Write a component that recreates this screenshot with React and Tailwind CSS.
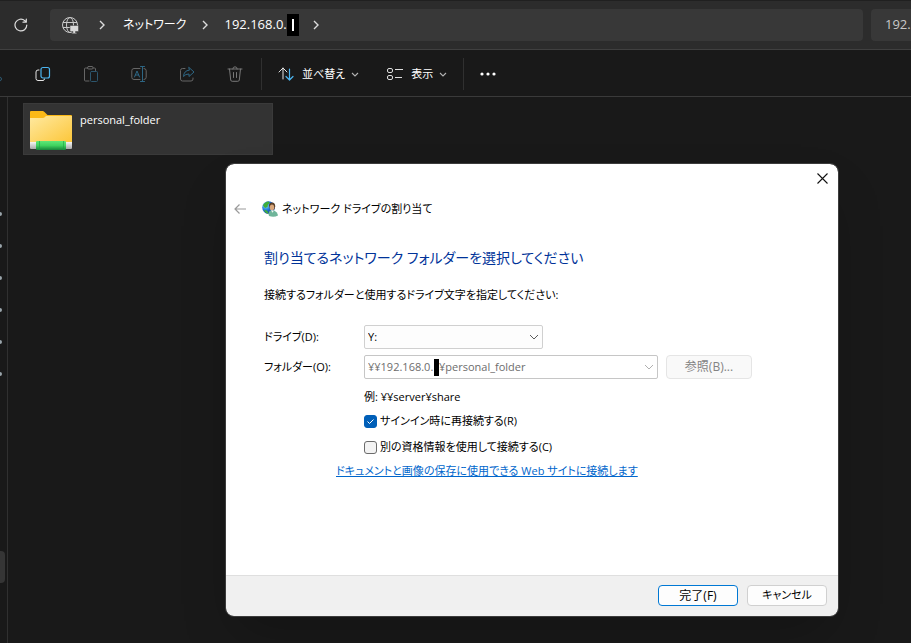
import { useState } from 'react';

const SIDEBAR_ITEMS = [1, 2, 3, 4, 5, 6];

function Chevron({ className }) {
  return (
    <svg viewBox="0 0 10 6" className={className} fill="none" stroke="currentColor" aria-hidden="true">
      <path d="M1 1l4 4 4-4" />
    </svg>
  );
}

function SmallChevron() {
  return (
    <svg viewBox="0 0 8 5" className="w-2 h-[5px] ml-1.5 text-[#b4b4b4]" fill="none" stroke="currentColor" strokeWidth="1.100" aria-hidden="true">
      <path d="M1 1l3 3 3-3" />
    </svg>
  );
}

function Crumb({ className }) {
  return (
    <svg viewBox="0 0 6 10" className={`w-1.5 h-2.5 shrink-0 ${className}`} fill="none" stroke="#dcdcdc" strokeWidth="1.4" aria-hidden="true">
      <path d="M1 1l4 4-4 4" />
    </svg>
  );
}

function GlobeIcon() {
  return (
    <svg viewBox="0 0 17 17" className="w-[17px] h-[17px] shrink-0" fill="none" aria-hidden="true">
      <g stroke="#c9c9c9">
        <circle cx="8" cy="8" r="7.500" />
        <ellipse cx="8" cy="8" rx="3.500" ry="7.500" />
        <path d="M1 5.500h14M1 10.500h14" />
      </g>
      <path d="M8 8.500h8.500v6h-3v1.200h1.200v1H9.800v-1H11v-1.200H8z" fill="#d8d8d8" stroke="#383838" strokeWidth="0.500" />
    </svg>
  );
}

function FolderIcon() {
  return (
    <svg viewBox="0 0 42 40" className="w-[42px] h-10 shrink-0" aria-hidden="true">
      <defs>
        <linearGradient id="folder" x1="0" y1="0" x2="1" y2="1">
          <stop offset="0" stopColor="#ffe9a0" />
          <stop offset="1" stopColor="#fcc638" />
        </linearGradient>
        <linearGradient id="pipe" x1="0" y1="0" x2="0" y2="1">
          <stop offset="0" stopColor="#5fe878" />
          <stop offset="0.5" stopColor="#3fd25f" />
          <stop offset="1" stopColor="#15843a" />
        </linearGradient>
        <linearGradient id="cap" x1="0" y1="0" x2="0" y2="1">
          <stop offset="0" stopColor="#f5f5f5" />
          <stop offset="1" stopColor="#a9a9a9" />
        </linearGradient>
      </defs>
      <path d="M0 2q0-1 1-1h11.500q1 0 2 1l3 3H41q1 0 1 1v10H0z" fill="#fbb917" />
      <path d="M0 8h13q1 0 2-1l1-1h26v27H0z" fill="url(#folder)" />
      <path d="M0 32h6v7H1q-1 0-1-1zM36 32h6v6q0 1-1 1h-5z" fill="url(#cap)" />
      <rect x="6" y="31" width="30" height="9" rx="1" fill="url(#pipe)" />
      <path d="M9.500 31v9M33.500 31v9" stroke="#1d9a44" strokeWidth="0.8" opacity="0.7" />
    </svg>
  );
}

function NetworkDriveIcon() {
  return (
    <svg viewBox="0 0 16 16" className="w-4 h-4 shrink-0" aria-hidden="true">
      <defs>
        <radialGradient id="earth" cx="0.3" cy="0.35" r="0.75">
          <stop offset="0" stopColor="#7fe0ff" />
          <stop offset="0.5" stopColor="#1f74d8" />
          <stop offset="1" stopColor="#0a2c86" />
        </radialGradient>
      </defs>
      <circle cx="6.500" cy="6.500" r="6.300" fill="url(#earth)" />
      <path d="M1 4.500C2 2 4 .7 6.500.5L8 2 6 3.500 5.500 6 3 7zM2 9l3 .5 1.500 2.500-1 .8C3.800 12 2.600 10.800 2 9z" fill="#3fae3a" />
      <path d="M7 4.500C7 2.500 8.500 1.500 10.200 1.500s3.200 1.500 3 3.700L12.500 8H8z" fill="#5a4029" />
      <ellipse cx="10" cy="6.500" rx="2.200" ry="3" fill="#d9a77c" />
      <path d="M6.500 13q0-3 2.500-3.700l3 .2q3.500 1.500 4 5-4 2.300-9 .5z" fill="#6fb59a" />
      <path d="M9 9.200l1.500 2.500L12 9.400z" fill="#eef6f2" />
    </svg>
  );
}

function ToolButton({ label, children }) {
  return (
    <button type="button" aria-label={label} className="w-12 h-8 shrink-0 flex items-center justify-center">
      <svg viewBox="0 0 16 16" className="w-4 h-4" fill="none" stroke="#666666" strokeLinecap="round" strokeLinejoin="round">
        {children}
      </svg>
    </button>
  );
}

function AddressBar() {
  return (
    <div className="flex items-center gap-2 h-[50px] bg-[#2c2c2c] border-t border-t-[#202020] border-b border-b-[#404040]">
      <button type="button" aria-label="更新" className="w-[42px] shrink-0 flex justify-center">
        <svg viewBox="0 0 14 14" className="w-3.5 h-3.5" fill="none" stroke="#dedede" strokeWidth="1.2" strokeLinecap="round" strokeLinejoin="round">
          <path d="M12.800 7A5.900 5.900 0 1 1 10.800 2.600L12.300 4M12.300 1v3.200H9" />
        </svg>
      </button>
      <nav className="flex-1 flex items-center h-8 px-3 rounded bg-[#383838] text-white text-[13px]">
        <GlobeIcon />
        <Crumb className="ml-5" />
        <span className="ml-[18px] text-[12px]">ネットワーク</span>
        <Crumb className="ml-4" />
        <span className="ml-4 flex items-center">
          192.168.0.
          <span className="w-3 h-[22px] bg-black flex items-center justify-center">
            <span className="w-0.5 h-3 bg-white" />
          </span>
        </span>
        <Crumb className="ml-3.5" />
      </nav>
      <div className="w-10 h-8 pl-3.5 shrink-0 flex items-center overflow-hidden rounded-l bg-[#383838] text-[#c8c8c8] text-[13px] whitespace-nowrap">
        192.
      </div>
    </div>
  );
}

function Toolbar() {
  return (
    <div className="flex items-center h-[47px] pt-0.5 overflow-hidden bg-[#191919] border-b border-[#3a3a3a] text-white text-[11px]">
      <div className="flex -ml-[29px]">
        <ToolButton label="切り取り">
          <path d="M4 1l7 10M12 1L5 11" />
          <g stroke="#2d566d">
            <circle cx="3.500" cy="13" r="2" />
            <circle cx="12.500" cy="13" r="2" />
          </g>
        </ToolButton>
        <ToolButton label="コピー">
          <path d="M4 4H3Q1 4 1 6v6.500q0 2 2 2h5q1.500 0 1.500-1.500" stroke="#e4e4e4" />
          <rect x="6" y="1.500" width="8.500" height="10.500" rx="2" stroke="#4cb5f0" strokeWidth="1.200" />
        </ToolButton>
        <ToolButton label="貼り付け">
          <path d="M5 2H2.500Q1.500 2 1.500 3v11q0 1 1 1H6M10 2h1.500q1 0 1 1v1.500" />
          <rect x="4.500" y="0.500" width="5.500" height="2.500" rx="1" />
          <rect x="7.500" y="5.500" width="7" height="10" rx="1" stroke="#2d566d" />
        </ToolButton>
        <ToolButton label="名前の変更">
          <path d="M9 2.500H3Q.8 2.500.8 4.700v6.600q0 2.200 2.200 2.200h6M13 2.500q2.200 0 2.200 2.200v6.600q0 2.200-2.200 2.200" />
          <path d="M3.500 11L6 5l2.500 6M4.300 9h3.400M11.500.5v15M9.500.5h4M9.500 15.500h4" stroke="#2d6684" />
        </ToolButton>
        <ToolButton label="共有">
          <path d="M6 2.500H3.500q-2 0-2 2V13q0 2 2 2H12q2 0 2-2v-1" />
          <path d="M10 1.500l5 4.500-5 4.500V8Q6.500 7.800 4.500 10.500 5 4.500 10 4.200z" stroke="#2d6684" />
        </ToolButton>
        <ToolButton label="削除">
          <path d="M1 3h14M5.800 3q0-2.200 2.200-2.200T10.200 3M2.500 3l1.200 11q.2 1.300 1.500 1.300h5.600q1.300 0 1.500-1.300L13.500 3M6.500 6.500v5M9.500 6.500v5" stroke="#777777" />
        </ToolButton>
      </div>
      <div className="w-px h-8 ml-0.5 bg-[#303030]" />
      <button type="button" className="flex items-center h-8 ml-4">
        <svg viewBox="0 0 16 14" className="w-4 h-3.5" fill="none" strokeLinecap="round" strokeLinejoin="round">
          <path d="M5 12V1M1 5l4-4 4 4" stroke="#e4e4e4" />
          <path d="M11.500 2v11M8 9.500l3.500 3.500 3.500-3.500" stroke="#4cb5f0" strokeWidth="1.200" />
        </svg>
        <span className="ml-2">並べ替え</span>
        <SmallChevron />
      </button>
      <button type="button" className="flex items-center h-8 ml-7">
        <svg viewBox="0 0 16 14" className="w-4 h-3.5" fill="none" stroke="#dddddd">
          <rect x="0.500" y="1.500" width="5" height="4" rx="1.500" />
          <rect x="0.500" y="8.500" width="5" height="4" rx="1.500" />
          <path d="M8 2.500h8M8 10.500h7" />
        </svg>
        <span className="ml-2">表示</span>
        <SmallChevron />
      </button>
      <div className="w-px h-8 ml-4 bg-[#303030]" />
      <button type="button" aria-label="もっと見る" className="ml-4">
        <svg viewBox="0 0 16 4" className="w-4 h-1" fill="#ffffff">
          <circle cx="2" cy="2" r="1.600" />
          <circle cx="8" cy="2" r="1.600" />
          <circle cx="14" cy="2" r="1.600" />
        </svg>
      </button>
    </div>
  );
}

function CheckOption({ id, checked, onChange, children }) {
  return (
    <div className="flex items-center gap-[3px] h-[26px]">
      <span className="relative flex">
        <input
          id={id}
          type="checkbox"
          checked={checked}
          onChange={(e) => onChange(e.target.checked)}
          className="appearance-none w-[13px] h-[13px] rounded-[3px] border border-[#6b6b6b] bg-[#f3f3f3] checked:bg-[#005fb8] checked:border-[#005fb8]"
        />
        {checked && (
          <svg viewBox="0 0 13 13" className="absolute inset-0 pointer-events-none" fill="none" stroke="#ffffff">
            <path d="M3.500 6.500l2 2 4-4" />
          </svg>
        )}
      </span>
      <label htmlFor={id}>{children}</label>
    </div>
  );
}

function MapDriveDialog() {
  const [drive, setDrive] = useState('Y:');
  const [reconnect, setReconnect] = useState(true);
  const [otherCredentials, setOtherCredentials] = useState(false);

  return (
    <div
      role="dialog"
      aria-labelledby="dialog-title"
      className="absolute left-[226px] top-[164px] w-[612px] flex flex-col rounded-lg overflow-hidden bg-white text-black text-[11px] outline outline-[#3c3c3c] shadow-2xl"
    >
      <div className="flex justify-end h-7 pr-2">
        <button type="button" aria-label="閉じる" className="p-[2px] h-7">
          <svg viewBox="0 0 11 11" className="w-[11px] h-[11px]" fill="none" stroke="#111111" strokeWidth="1.100">
            <path d="M.5.5l10 10M10.500.5l-10 10" />
          </svg>
        </button>
      </div>

      <div className="flex items-center h-[34px] pl-2">
        <button type="button" aria-label="戻る" disabled>
          <svg viewBox="0 0 12 10" className="w-3 h-2.5" fill="none" stroke="#9a9a9a" strokeWidth="1.200">
            <path d="M12 5H1M5.500.5L1 5l4.500 4.500" />
          </svg>
        </button>
        <span className="ml-4"><NetworkDriveIcon /></span>
        <span id="dialog-title" className="ml-1">ネットワーク ドライブの割り当て</span>
      </div>

      <div className="flex flex-col pl-[38px] pr-4 pt-[18px]">
        <h1 className="text-[14px] leading-7 text-[#003399]">割り当てるネットワーク フォルダーを選択してください</h1>
        <p className="mt-[13px] leading-5">接続するフォルダーと使用するドライブ文字を指定してください:</p>

        <div className="flex items-center mt-5 h-6">
          <label htmlFor="drive" className="w-[100px]">ドライブ(D):</label>
          <span className="relative flex items-center">
            <select
              id="drive"
              value={drive}
              onChange={(e) => setDrive(e.target.value)}
              className="appearance-none w-[179px] h-6 pl-[3px] border border-[#d0d0d0] rounded-[2px] bg-[#fdfdfd]"
            >
              <option>Y:</option>
              <option>Z:</option>
            </select>
            <Chevron className="absolute right-1 w-2.5 h-1.5 text-[#5c5c5c] pointer-events-none" />
          </span>
        </div>

        <div className="flex items-center mt-1.5 h-6">
          <label htmlFor="folder-path" className="w-[100px]">フォルダー(O):</label>
          <span className="relative flex items-center">
            <select
              id="folder-path"
              disabled
              className="appearance-none w-[294px] h-6 pl-[3px] border border-[#c6c6c6] rounded-[2px] bg-white text-[#6d6d6d] opacity-100"
            >
              <option>{'¥¥192.168.0.\u00a0\u00a0¥personal_folder'}</option>
            </select>
            <span className="absolute left-[70px] w-[5px] h-[17px] bg-black" />
            <Chevron className="absolute right-1 w-2.5 h-1.5 text-[#b0b0b0] pointer-events-none" />
          </span>
          <button
            type="button"
            disabled
            className="w-[86px] h-6 ml-2 border border-[#e5e5e5] rounded bg-[#f9f9f9] text-[#838383] text-[12px]"
          >
            参照(B)...
          </button>
        </div>

        <div className="ml-[100px] mt-2">
          <p className="mb-px leading-5">例: ¥¥server¥share</p>
          <CheckOption id="reconnect" checked={reconnect} onChange={setReconnect}>
            サインイン時に再接続する(R)
          </CheckOption>
          <CheckOption id="credentials" checked={otherCredentials} onChange={setOtherCredentials}>
            別の資格情報を使用して接続する(C)
          </CheckOption>
        </div>
        <a href="#" className="self-start ml-[72px] mt-px leading-5 text-[#0066cc] underline">
          ドキュメントと画像の保存に使用できる Web サイトに接続します
        </a>
      </div>

      <div className="flex justify-end gap-[9px] mt-[94px] px-[11px] pt-[9px] pb-2.5 bg-[#f0f0f0] border-t border-[#dfdfdf] text-[12px]">
        <button type="button" className="w-20 h-[21px] border border-[#0078d4] rounded bg-[#fdfdfd]">
          完了(F)
        </button>
        <button type="button" className="w-20 h-[21px] border border-[#d0d0d0] rounded bg-[#fdfdfd] text-[11px]">
          キャンセル
        </button>
      </div>
    </div>
  );
}

export default function App() {
  return (
    <div className="relative flex flex-col min-h-screen overflow-hidden bg-[#191919] font-['Open_Sans','Noto_Sans_CJK_JP',sans-serif] [font-feature-settings:'palt']">
      <AddressBar />
      <Toolbar />
      <div className="flex-1 flex">
        <aside className="w-2 shrink-0 border-r border-[#303030] overflow-hidden">
          <ul className="flex flex-col gap-7 pt-[115px]">
            {SIDEBAR_ITEMS.map((item) => (
              <li key={item} className="w-0.5 h-1 rounded-r bg-[#9aa5ab]" />
            ))}
          </ul>
          <div className="w-[5px] h-8 mt-[175px] rounded-r bg-[#353535]" />
        </aside>
        <main className="flex-1 pl-[15px] pt-1.5">
          <div className="flex gap-2 w-[250px] h-[52px] p-1.5 border border-[#3a3a3a] bg-[#333333] text-white text-[11px]">
            <FolderIcon />
            <span className="leading-5">personal_folder</span>
          </div>
        </main>
      </div>
      <MapDriveDialog />
    </div>
  );
}
